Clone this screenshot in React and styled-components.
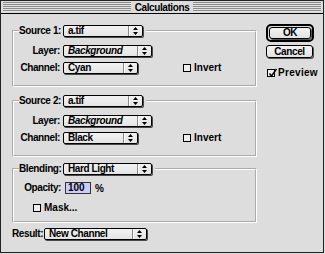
import React from "react";
import styled, { createGlobalStyle } from "styled-components";

const GlobalStyle = createGlobalStyle`
  html, body {
    margin: 0;
    padding: 0;
    background: #dcdcdc;
  }
  body {
    font-family: "Liberation Sans", Arial, sans-serif;
    font-size: 10px;
    font-weight: bold;
    letter-spacing: -0.4px;
    color: #000;
  }
`;

const Window = styled.div`
  width: 324px;
  height: 253px;
  box-sizing: border-box;
  border: 1px solid #222;
  background: #dddddd;
  display: flex;
  flex-direction: column;
`;

const TitleBar = styled.div`
  height: 13px;
  box-sizing: border-box;
  border-bottom: 1px solid #000;
  padding: 1px 2px;
  display: flex;
`;

const Stripes = styled.div`
  flex: 1;
  display: flex;
  justify-content: center;
  align-items: center;
  background: repeating-linear-gradient(
    to bottom,
    #8c8c8c 0 1px,
    #e2e2e2 1px 2px
  );
`;

const Title = styled.span`
  background: #dddddd;
  padding: 0 4px;
  line-height: 11px;
`;

const Body = styled.div`
  display: flex;
  padding: 10px 0 0 11px;
`;

const LeftCol = styled.div`
  display: flex;
  flex-direction: column;
  padding-top: 1px;
  width: 245px;
`;

const RightCol = styled.div`
  display: flex;
  flex-direction: column;
  margin-left: 9px;
  width: 49px;
`;

const Group = styled.fieldset`
  margin: ${(p) => p.$mt || 0}px 0 0;
  padding: ${(p) => p.$pt}px 0 ${(p) => p.$pb}px 0;
  border: 2px groove #ffffff;
  width: 245px;
  min-width: 0;
  box-sizing: border-box;
`;

const Legend = styled.legend`
  margin-left: 5px;
  padding: 0 3px 0 0;
  display: flex;
  align-items: center;
  height: 12px;
`;

const Row = styled.div`
  display: flex;
  align-items: center;
  height: 12px;
  margin-top: ${(p) => p.$mt || 0}px;
`;

const FieldLabel = styled.span`
  width: ${(p) => p.$w}px;
  flex-shrink: 0;
  box-sizing: border-box;
  padding-right: 2px;
  text-align: right;
  line-height: 12px;
  white-space: nowrap;
`;

const PopupBox = styled.div`
  display: flex;
  align-items: stretch;
  width: ${(p) => p.$w}px;
  height: 12px;
  margin-left: ${(p) => p.$ml ?? 1}px;
  box-sizing: border-box;
  border: 1px solid #000;
  border-radius: 2px;
  background: linear-gradient(#f2f2f2, #e4e4e4);
  box-shadow: 1px 1px 0 #4a4a4a;
  flex-shrink: 0;
`;

const PopupText = styled.span`
  flex: 1;
  padding-left: 4px;
  line-height: 10px;
  white-space: nowrap;
  overflow: hidden;
  font-style: ${(p) => (p.$italic ? "italic" : "normal")};
`;

const PopupArrow = styled.span`
  width: 13px;
  display: flex;
  align-items: center;
  justify-content: center;
  border-left: 1px solid #8a8a8a;
  box-shadow: inset 1px 0 0 #ffffff;
`;

const CheckRow = styled.label`
  display: flex;
  align-items: center;
  margin-left: ${(p) => p.$ml || 0}px;
  letter-spacing: ${(p) => p.$ls || 0}px;
  line-height: 12px;
`;

const CheckBox = styled.span`
  position: relative;
  width: 8px;
  height: 8px;
  box-sizing: border-box;
  border: 1px solid #000;
  background: #eeeeee;
  margin-right: 3px;
  flex-shrink: 0;
  svg {
    position: absolute;
    left: 0;
    top: -2px;
  }
`;

const NumberField = styled.div`
  width: 26px;
  height: 12px;
  margin-left: 2px;
  box-sizing: border-box;
  border: 1px solid #333;
  background: #ccccff;
  padding-left: 2px;
  line-height: 10px;
  letter-spacing: 0;
`;

const Unit = styled.span`
  margin-left: 4px;
`;

const DefaultRing = styled.div`
  width: 48px;
  height: 18px;
  box-sizing: border-box;
  border: 2px solid #000;
  border-radius: 5px;
  padding: 1px;
  display: flex;
`;

const Button = styled.button`
  width: ${(p) => (p.$w ? `${p.$w}px` : "100%")};
  height: ${(p) => (p.$h ? `${p.$h}px` : "100%")};
  margin: ${(p) => p.$m || 0};
  padding: 0;
  box-sizing: border-box;
  border: 1px solid #000;
  border-radius: 3px;
  background: linear-gradient(#f4f4f4, #e2e2e2);
  box-shadow: 1px 1px 0 #555;
  font: inherit;
  letter-spacing: inherit;
  line-height: 10px;
  color: #000;
`;

const Arrows = () => (
  <svg width="5" height="8" viewBox="0 0 5 8">
    <path d="M2.5 0L5 3H0z M0 5h5L2.5 8z" fill="#000" />
  </svg>
);

const Popup = ({ w, ml, italic, children }) => (
  <PopupBox $w={w} $ml={ml}>
    <PopupText $italic={italic}>{children}</PopupText>
    <PopupArrow>
      <Arrows />
    </PopupArrow>
  </PopupBox>
);

const Check = ({ checked, ml, ls, children }) => (
  <CheckRow $ml={ml} $ls={ls}>
    <CheckBox>
      {checked && (
        <svg width="10" height="10" viewBox="0 0 10 10">
          <path d="M1.5 5.5l2 2.5 5-7" stroke="#000" strokeWidth="1.4" fill="none" />
        </svg>
      )}
    </CheckBox>
    {children}
  </CheckRow>
);

const SourceGroup = ({ title, channel, mt }) => (
  <Group $mt={mt} $pt={8} $pb={11}>
    <Legend>
      <FieldLabel $w={43}>{title}</FieldLabel>
      <Popup w={80}>a.tif</Popup>
    </Legend>
    <Row>
      <FieldLabel $w={48}>Layer:</FieldLabel>
      <Popup w={89} italic>
        Background
      </Popup>
    </Row>
    <Row $mt={5}>
      <FieldLabel $w={48}>Channel:</FieldLabel>
      <Popup w={75}>{channel}</Popup>
      <Check ml={45} ls={0}>
        Invert
      </Check>
    </Row>
  </Group>
);

export default function App() {
  return (
    <>
      <GlobalStyle />
      <Window>
        <TitleBar>
          <Stripes>
            <Title>Calculations</Title>
          </Stripes>
        </TitleBar>
        <Body>
          <LeftCol>
            <SourceGroup title="Source 1:" channel="Cyan" />
            <SourceGroup title="Source 2:" channel="Black" mt={8} />
            <Group $mt={6} $pt={7} $pb={7}>
              <Legend>
                <FieldLabel $w={43}>Blending:</FieldLabel>
                <Popup w={89}>Hard Light</Popup>
              </Legend>
              <Row>
                <FieldLabel $w={49}>Opacity:</FieldLabel>
                <NumberField>100</NumberField>
                <Unit>%</Unit>
              </Row>
              <Row $mt={8}>
                <Check ml={19} ls={0}>
                  Mask...
                </Check>
              </Row>
            </Group>
            <Row $mt={5}>
              <FieldLabel $w={31}>Result:</FieldLabel>
              <Popup w={103}>New Channel</Popup>
            </Row>
          </LeftCol>
          <RightCol>
            <DefaultRing>
              <Button>OK</Button>
            </DefaultRing>
            <Button $w={47} $h={13} $m="3px 0 0">
              Cancel
            </Button>
            <Row $mt={9}>
              <Check checked ml={1} ls={0.3}>
                Preview
              </Check>
            </Row>
          </RightCol>
        </Body>
      </Window>
    </>
  );
}
